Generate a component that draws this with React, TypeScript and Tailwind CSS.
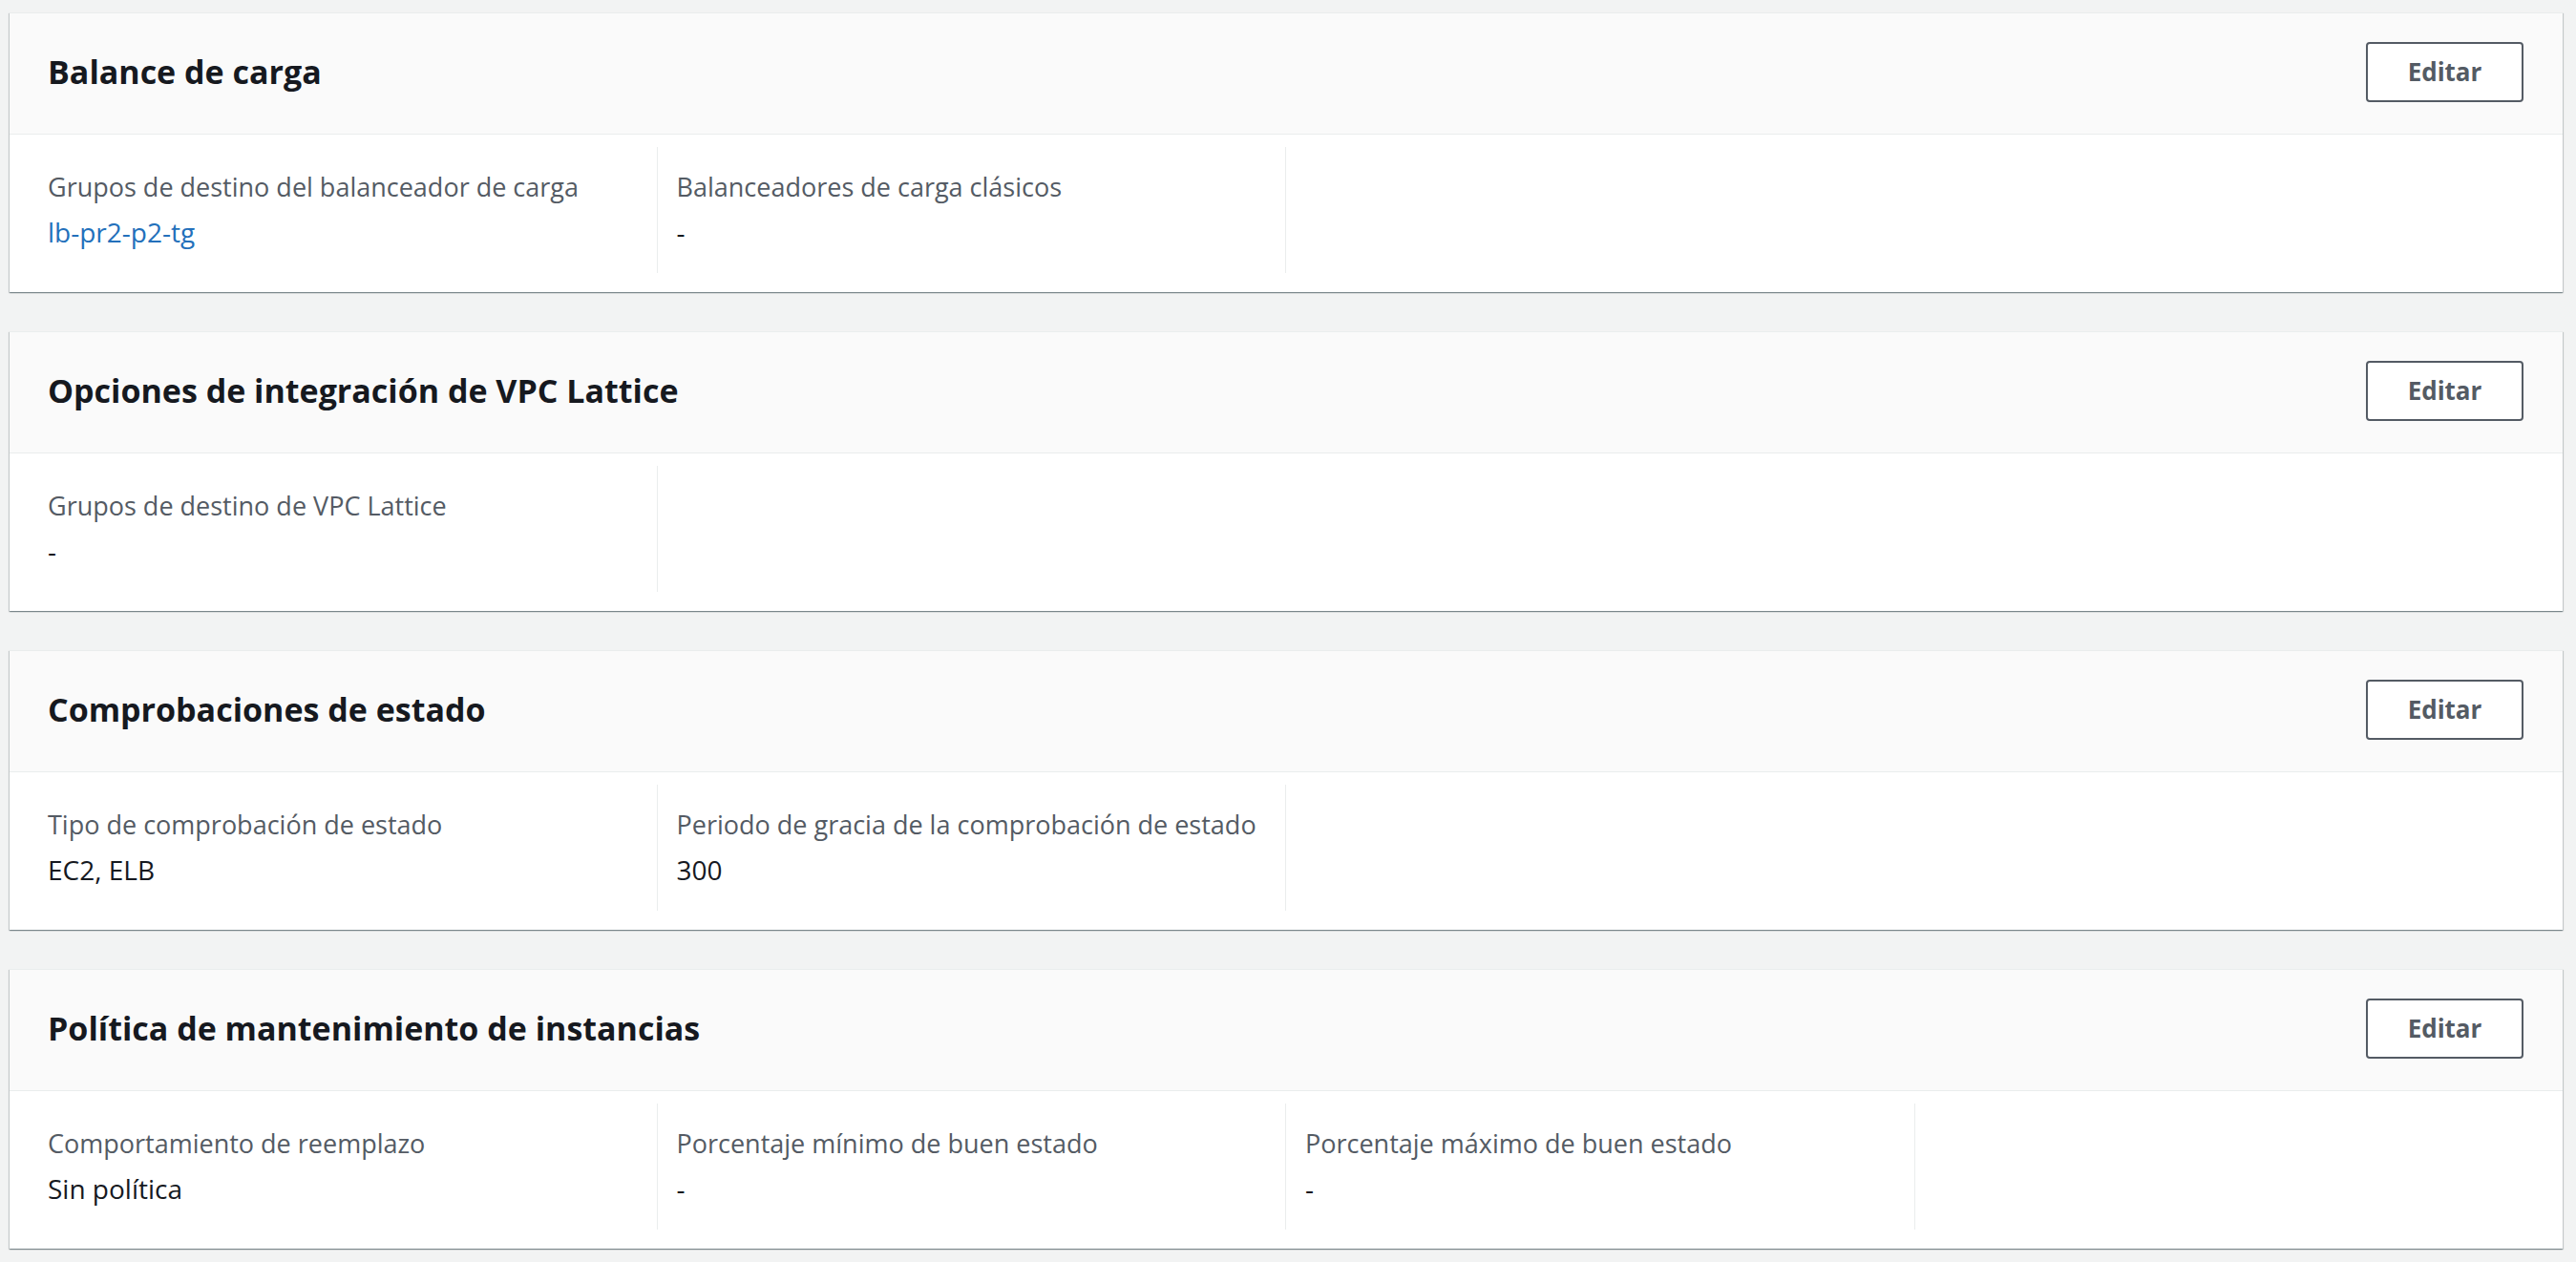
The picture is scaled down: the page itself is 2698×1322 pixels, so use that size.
type Field = { label: string; value: string; link?: boolean };

type Section = { title: string; fields: Field[] };

const sections: Section[] = [
  {
    title: "Balance de carga",
    fields: [
      { label: "Grupos de destino del balanceador de carga", value: "lb-pr2-p2-tg", link: true },
      { label: "Balanceadores de carga clásicos", value: "-" },
    ],
  },
  {
    title: "Opciones de integración de VPC Lattice",
    fields: [{ label: "Grupos de destino de VPC Lattice", value: "-" }],
  },
  {
    title: "Comprobaciones de estado",
    fields: [
      { label: "Tipo de comprobación de estado", value: "EC2, ELB" },
      { label: "Periodo de gracia de la comprobación de estado", value: "300" },
    ],
  },
  {
    title: "Política de mantenimiento de instancias",
    fields: [
      { label: "Comportamiento de reemplazo", value: "Sin política" },
      { label: "Porcentaje mínimo de buen estado", value: "-" },
      { label: "Porcentaje máximo de buen estado", value: "-" },
    ],
  },
];

function Card({ section }: { section: Section }) {
  return (
    <section className="bg-white border-t border-[#eaeded] shadow-[0_1px_1px_0_rgba(0,28,36,0.3),1px_1px_1px_0_rgba(0,28,36,0.15),-1px_1px_1px_0_rgba(0,28,36,0.15)]">
      <div className="flex h-[127px] items-center justify-between border-b border-[#eaeded] bg-[#fafafa] pb-[4px] pl-[40px] pr-[41px]">
        <h2 className="text-[34px] font-bold leading-[44px] text-[#16191f]">{section.title}</h2>
        <button className="h-[63px] w-[165px] rounded-[4px] border-2 border-[#545b64] bg-white text-[26px] font-bold text-[#545b64]">
          Editar
        </button>
      </div>
      <div className="grid grid-cols-4 px-[20px] pt-[13px] pb-[20px]">
        {section.fields.map((f) => (
          <div key={f.label} className="border-r border-[#eaeded] pl-[20px] pt-[25px] pb-[26px]">
            <div className="text-[27px] leading-[34px] text-[#545b64]">{f.label}</div>
            <div
              className={
                "mt-[13px] text-[28px] leading-[34px] " +
                (f.link ? "text-[#2370bb]" : "text-[#16191f]")
              }
            >
              {f.value}
            </div>
          </div>
        ))}
      </div>
    </section>
  );
}

export default function App() {
  return (
    <div
      className="min-h-screen bg-[#f2f3f3] pt-[13px] pb-[14px] pl-[10px] pr-[14px]"
      style={{ fontFamily: '"Open Sans", "Noto Sans", sans-serif' }}
    >
      <div className="flex flex-col gap-[41px]">
        {sections.map((s) => (
          <Card key={s.title} section={s} />
        ))}
      </div>
    </div>
  );
}
